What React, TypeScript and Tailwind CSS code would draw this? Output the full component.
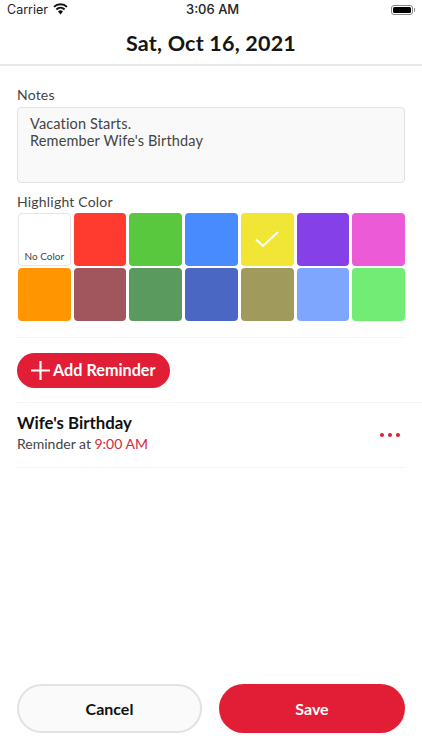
import React from "react";

const colors = [
  "bg-[#ff3b30]", "bg-[#5ac83f]", "bg-[#478bff]", "bg-[#f1e536]", "bg-[#8540e8]", "bg-[#ec5ad8]",
  "bg-[#ff9500]", "bg-[#a0565c]", "bg-[#5a9a5f]", "bg-[#4a67c4]", "bg-[#a09b5c]", "bg-[#7ea6ff]", "bg-[#72ec74]",
];

function Swatch({ c, check }: { c: string; check?: boolean }) {
  return (
    <div className={`rounded-[4px] h-[53px] flex items-center justify-center ${c}`}>
      {check && (
        <svg width="24" height="17" viewBox="0 0 24 17" fill="none" stroke="#fff" strokeWidth="2">
          <path d="M1 8.5 L8 15 L23 1" />
        </svg>
      )}
    </div>
  );
}

export default function App() {
  return (
    <div className="w-[422px] h-[750px] bg-white flex flex-col font-['Lato','Noto_Sans',sans-serif] text-[#111] overflow-hidden">
      <div className="h-[20px] flex items-center justify-between px-[7px] font-['Inter',sans-serif] relative">
        <div className="flex items-center gap-[5px]">
          <span className="text-[12.5px] text-[#222]">Carrier</span>
          <svg width="15" height="12" viewBox="0 0 15 12" className="-mt-[3px]">
            <path d="M7.5 11.5 L5 8.5 A3.6 3.6 0 0 1 10 8.5 Z" fill="#111" />
            <path d="M3.4 6.4 A6 6 0 0 1 11.6 6.4" fill="none" stroke="#111" strokeWidth="2" />
            <path d="M1 3.9 A9.4 9.4 0 0 1 14 3.9" fill="none" stroke="#111" strokeWidth="2" />
          </svg>
        </div>
        <span className="absolute left-[186px] font-medium text-[13px] text-[#222]">3:06 AM</span>
        <div className="flex items-center">
          <div className="w-[22px] h-[10px] rounded-[3px] border border-[#888] p-[1px]">
            <div className="w-full h-full bg-black rounded-[1.5px]" />
          </div>
          <div className="w-[1px] h-[4px] bg-[#999] ml-[1px]" />
        </div>
      </div>

      <div className="h-[46px] shrink-0 flex items-center justify-center border-b-2 border-[#e8e8e8]">
        <h1 className="text-[21.5px] font-bold tracking-[0.2px] text-[#151515] mt-[2px]">Sat, Oct 16, 2021</h1>
      </div>

      <div className="px-[17px] flex-1 flex flex-col">
        <div className="mt-[20px] text-[14px] leading-[18px] text-[#444] tracking-[0.2px]">Notes</div>
        <div className="mt-[3px] h-[76px] rounded-[4px] border-[1.5px] border-[#e2e2e2] bg-[#f9f9f9] pl-[12px] pt-[6.5px] text-[14.5px] leading-[17.5px] text-[#444] tracking-[0.15px]">
          <div>Vacation Starts.</div>
          <div>Remember Wife's Birthday</div>
        </div>
        <div className="mt-[10px] text-[14px] leading-[18px] text-[#444] tracking-[0.2px]">Highlight Color</div>

        <div className="mt-[2px] ml-[1px] grid grid-cols-7 gap-x-[3px] gap-y-[2px]">
          <div className="rounded-[4px] h-[53px] border border-[#e4e4e4] flex items-end justify-center pb-[1px] text-[10px] text-[#444]">No Color</div>
          {colors.map((c, i) => (
            <Swatch key={c} c={c} check={i === 3} />
          ))}
        </div>

        <div className="mt-[16px] h-px bg-[#f3f3f3]" />

        <button className="mt-[15px] w-[153px] h-[35px] rounded-full bg-[#e21e36] text-white flex items-center pl-[14px] gap-[3px] text-[16.2px] font-bold">
          <svg width="19" height="19" viewBox="0 0 19 19" stroke="#fff" strokeWidth="2.2">
            <path d="M9.5 0 V19 M0 9.5 H19" />
          </svg>
          Add Reminder
        </button>

        <div className="mt-[14px] -mr-[17px] h-px bg-[#f3f3f3]" />

        <div className="h-[64px] flex items-center justify-between">
          <div className="-mt-[4px]">
            <div className="text-[16.8px] leading-[20px] font-bold text-[#111]">Wife's Birthday</div>
            <div className="mt-[1px] text-[14px] leading-[20px] text-[#444]">
              Reminder at <span className="text-[#d42a40]">9:00 AM</span>
            </div>
          </div>
          <div className="flex gap-[4px] mr-[5px]">
            <div className="w-[4px] h-[4px] rounded-full bg-[#d6203a]" />
            <div className="w-[4px] h-[4px] rounded-full bg-[#d6203a]" />
            <div className="w-[4px] h-[4px] rounded-full bg-[#d6203a]" />
          </div>
        </div>
        <div className="h-px bg-[#f5f5f5]" />

        <div className="mt-auto mb-[17px] flex gap-[17px]">
          <button className="w-[185px] h-[49px] rounded-full border-2 border-[#e2e2e2] bg-[#fafafa] text-[16px] font-bold text-[#111]">Cancel</button>
          <button className="w-[186px] h-[49px] rounded-full bg-[#e21e36] text-[16px] font-bold text-white">Save</button>
        </div>
      </div>
    </div>
  );
}
